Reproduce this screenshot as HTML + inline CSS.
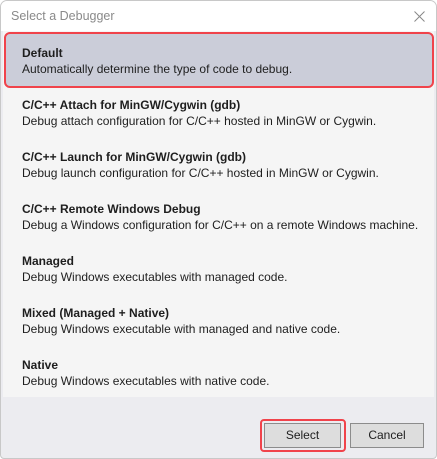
<!DOCTYPE html>
<html><head><style>
*{margin:0;padding:0;box-sizing:border-box}
body{width:437px;height:459px;background:#fff;font-family:"Segoe UI","Liberation Sans",sans-serif;font-size:12px;color:#1e1e1e;overflow:hidden;position:relative}
.win{position:absolute;left:0;top:0;width:437px;height:459px;border:1px solid #c8c8c8;border-radius:7px 7px 4px 4px;background:#ececf0;overflow:hidden}
.title{position:absolute;left:0;top:0;width:435px;height:30px;background:#fff;color:#8a8a8a;font-size:12.5px;padding:8px 0 0 10px}
.x{position:absolute;right:11px;top:10px}
.list{position:absolute;left:2px;top:30px;width:431px;height:366px;background:#f5f5f5}
.it{position:absolute;left:19px;line-height:16px}
.it b{display:block;font-weight:bold}
.sel{position:absolute;left:1px;top:1px;width:430px;height:56px;background:#cbcdd9;border:2px solid #f0434b;border-radius:6px}
.btn{position:absolute;top:422px;height:25px;border:1px solid #8c8c8c;background:#dddddd;text-align:center;line-height:23px;font-size:12px}
.red{position:absolute;left:259px;top:418px;width:86px;height:33px;border:2px solid #f0434b;border-radius:4px}
</style></head><body>
<div class="win">
<div class="title">Select a Debugger<svg class="x" width="11" height="11" viewBox="0 0 11 11"><path d="M0.5 0.5L10.5 10.5M10.5 0.5L0.5 10.5" stroke="#888" stroke-width="1"/></svg></div>
<div class="list">
<div class="sel"></div>
<div class="it" style="top:14px"><b>Default</b>Automatically determine the type of code to debug.</div>
<div class="it" style="top:66px"><b>C/C++ Attach for MinGW/Cygwin (gdb)</b>Debug attach configuration for C/C++ hosted in MinGW or Cygwin.</div>
<div class="it" style="top:118px"><b>C/C++ Launch for MinGW/Cygwin (gdb)</b>Debug launch configuration for C/C++ hosted in MinGW or Cygwin.</div>
<div class="it" style="top:170px"><b>C/C++ Remote Windows Debug</b>Debug a Windows configuration for C/C++ on a remote Windows machine.</div>
<div class="it" style="top:222px"><b>Managed</b>Debug Windows executables with managed code.</div>
<div class="it" style="top:274px"><b>Mixed (Managed + Native)</b>Debug Windows executable with managed and native code.</div>
<div class="it" style="top:326px"><b>Native</b>Debug Windows executables with native code.</div>
</div>
<div class="red"></div>
<div class="btn" style="left:263px;width:77px">Select</div>
<div class="btn" style="left:349px;width:74px">Cancel</div>
</div>
</body></html>
